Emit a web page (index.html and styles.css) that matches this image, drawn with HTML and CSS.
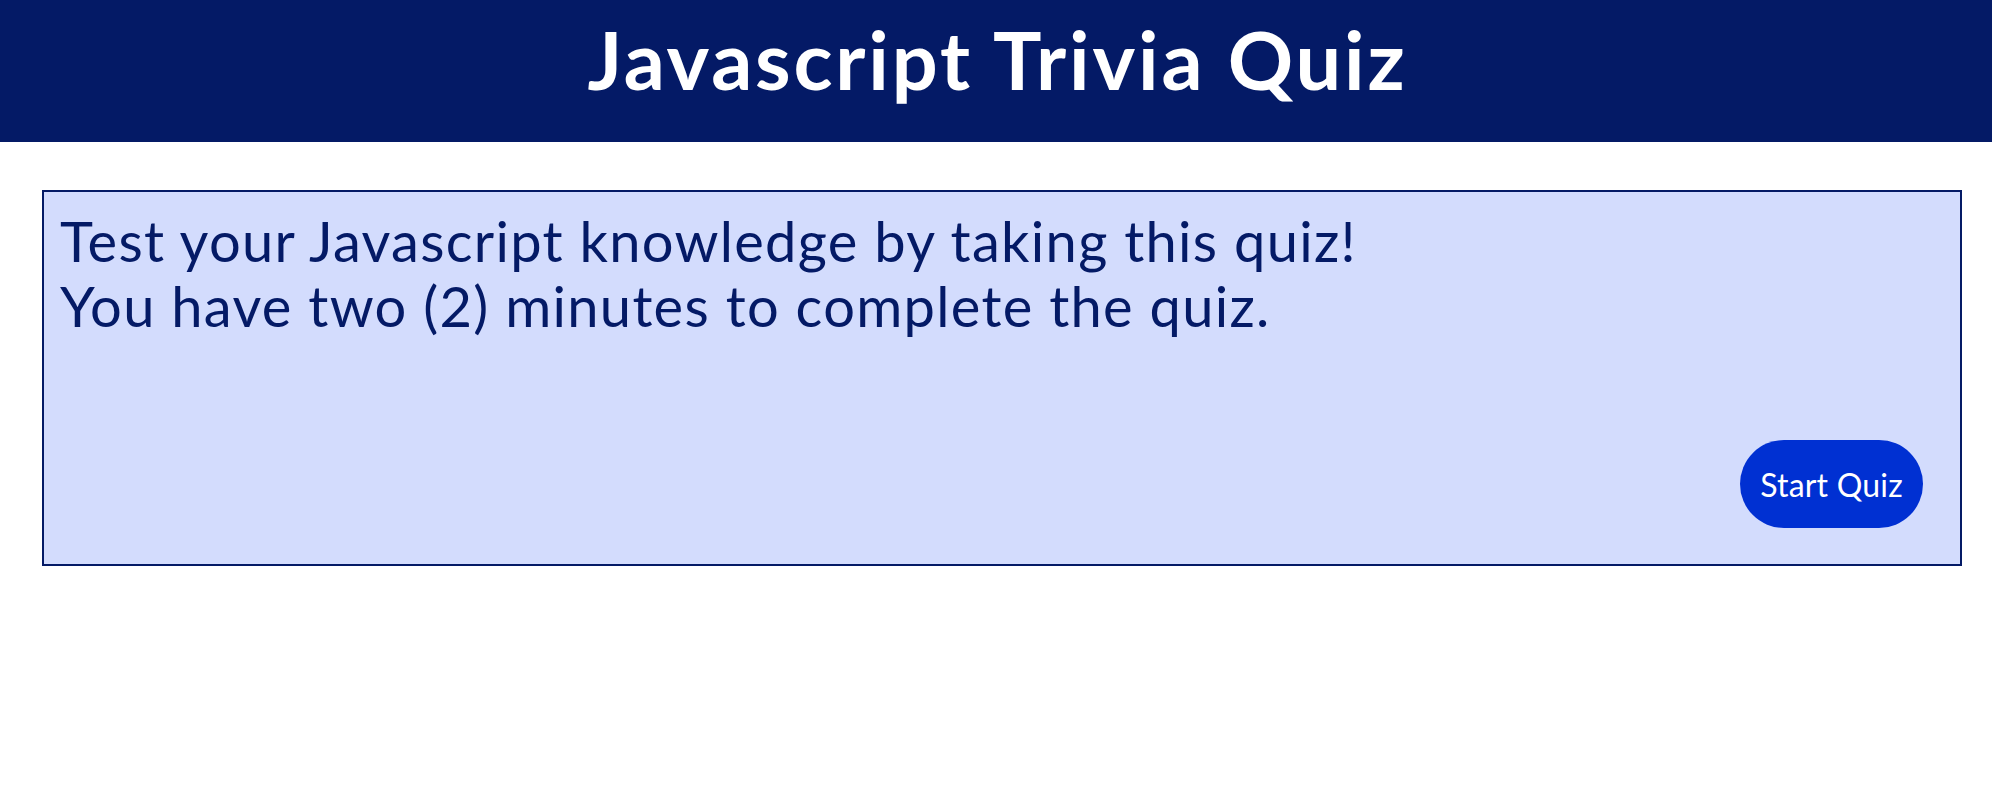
FILE: index.html
```html
<!DOCTYPE html>
<html lang="en">
<head>
<meta charset="utf-8">
<title>Javascript Trivia Quiz</title>
<link rel="stylesheet" href="styles.css">
</head>
<body>
<header class="site-header">
  <h1 class="site-title">Javascript Trivia Quiz</h1>
</header>
<main class="main">
  <section class="intro-card">
    <p class="intro-text">Test your Javascript knowledge by taking this quiz!<br>You have two (2) minutes to complete the quiz.</p>
    <button class="start-btn" type="button">Start Quiz</button>
  </section>
</main>
</body>
</html>
```

FILE: styles.css
```css
* {
  box-sizing: border-box;
}

html, body {
  margin: 0;
  padding: 0;
  background: #ffffff;
}

body {
  font-family: "Lato", "Noto Sans", sans-serif;
  color: #041a66;
}

.site-header {
  height: 142px;
  background: #041a66;
  display: flex;
  justify-content: center;
  align-items: flex-start;
}

.site-title {
  margin: 0;
  padding-top: 18px;
  padding-left: 3px;
  font-family: "Lato", sans-serif;
  font-weight: 700;
  font-size: 81px;
  line-height: 1;
  letter-spacing: 2.8px;
  color: #ffffff;
}

.main {
  padding: 48px 30px 0 42px;
}

.intro-card {
  display: flex;
  flex-direction: column;
  background: #d3dcfd;
  border: 2px solid #041a66;
  padding: 16px;
}

.intro-text {
  margin: 0;
  font-size: 56px;
  line-height: 65px;
  letter-spacing: 1.3px;
  color: #041a66;
}

.start-btn {
  align-self: flex-end;
  margin: 102px 21px 20px 0;
  width: 183px;
  height: 88px;
  border: none;
  border-radius: 44px;
  background: #0030d2;
  color: #ffffff;
  font-family: "Lato", sans-serif;
  font-size: 32px;
  letter-spacing: 0.2px;
  padding: 0;
  cursor: pointer;
}
```
